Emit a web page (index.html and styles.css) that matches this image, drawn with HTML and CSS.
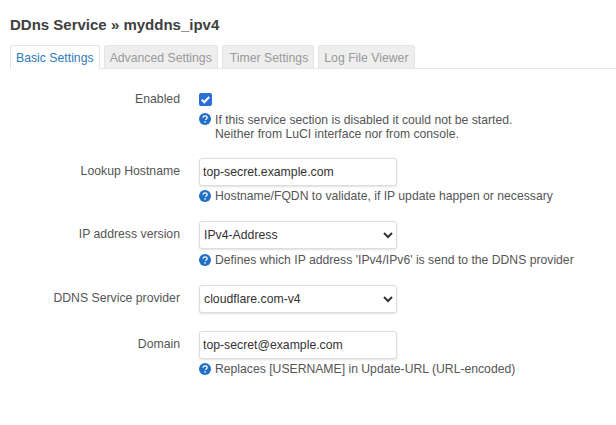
FILE: index.html
```html
<!DOCTYPE html>
<html lang="en">
<head>
  <meta charset="UTF-8" />
  <title>DDns Service - myddns_ipv4</title>
  <link rel="stylesheet" href="styles.css">
</head>
<body>

  <h2>DDns Service » myddns_ipv4</h2>

  <ul class="tabs">
    <li class="tab active">Basic Settings</li>
    <li class="tab">Advanced Settings</li>
    <li class="tab tab-timer">Timer Settings</li>
    <li class="tab">Log File Viewer</li>
  </ul>

  <div class="section">
    <div class="row row-check">
      <label class="title">Enabled</label>
      <div class="field">
        <span class="checkbox">
          <svg viewBox="0 0 13 13" width="13" height="13"><path d="M2.800 6.700l2.500 2.500L10.200 4" fill="none" stroke="#fff" stroke-width="2"/></svg>
        </span>
        <div class="help">
          <svg class="help-icon" viewBox="0 0 12 12" width="12" height="12"><circle cx="6" cy="6" r="6" fill="#1f6fc4"/><path d="M4.100 4.700c0-1.200.9-1.900 2-1.900s2 .7 2 1.700c0 1.500-1.500 1.400-1.500 2.600" fill="none" stroke="#fff" stroke-width="1.300"/><rect x="5.300" y="8.200" width="1.500" height="1.400" fill="#fff"/></svg>
          <span>If this service section is disabled it could not be started.<br>Neither from LuCI interface nor from console.</span>
        </div>
      </div>
    </div>

    <div class="row">
      <label class="title">Lookup Hostname</label>
      <div class="field">
        <input class="input" type="text" value="top-secret.example.com">
        <div class="help">
          <svg class="help-icon" viewBox="0 0 12 12" width="12" height="12"><circle cx="6" cy="6" r="6" fill="#1f6fc4"/><path d="M4.100 4.700c0-1.200.9-1.900 2-1.900s2 .7 2 1.700c0 1.500-1.500 1.400-1.500 2.600" fill="none" stroke="#fff" stroke-width="1.300"/><rect x="5.300" y="8.200" width="1.500" height="1.400" fill="#fff"/></svg>
          <span>Hostname/FQDN to validate, if IP update happen or necessary</span>
        </div>
      </div>
    </div>

    <div class="row row-select">
      <label class="title">IP address version</label>
      <div class="field">
        <select class="input">
          <option>IPv4-Address</option>
        </select>
        <div class="help">
          <svg class="help-icon" viewBox="0 0 12 12" width="12" height="12"><circle cx="6" cy="6" r="6" fill="#1f6fc4"/><path d="M4.100 4.700c0-1.200.9-1.900 2-1.900s2 .7 2 1.700c0 1.500-1.500 1.400-1.500 2.600" fill="none" stroke="#fff" stroke-width="1.300"/><rect x="5.300" y="8.200" width="1.500" height="1.400" fill="#fff"/></svg>
          <span>Defines which IP address 'IPv4/IPv6' is send to the DDNS provider</span>
        </div>
      </div>
    </div>

    <div class="row row-select">
      <label class="title">DDNS Service provider</label>
      <div class="field">
        <select class="input">
          <option>cloudflare.com-v4</option>
        </select>
      </div>
    </div>

    <div class="row">
      <label class="title">Domain</label>
      <div class="field">
        <input class="input" type="text" value="top-secret@example.com">
        <div class="help">
          <svg class="help-icon" viewBox="0 0 12 12" width="12" height="12"><circle cx="6" cy="6" r="6" fill="#1f6fc4"/><path d="M4.100 4.700c0-1.200.9-1.900 2-1.900s2 .7 2 1.700c0 1.500-1.500 1.400-1.500 2.600" fill="none" stroke="#fff" stroke-width="1.300"/><rect x="5.300" y="8.200" width="1.500" height="1.400" fill="#fff"/></svg>
          <span>Replaces [USERNAME] in Update-URL (URL-encoded)</span>
        </div>
      </div>
    </div>
  </div>

</body>
</html>
```

FILE: styles.css
```css
body {
  font-family: 'Liberation Sans', Arial, sans-serif;
  font-size: 12.25px;
  line-height: 14px;
  color: #555;
  background: #fff;
  margin: 0;
  padding: 16px 0 0 10px;
}

h2 {
  font-size: 15px;
  line-height: 17px;
  color: #404040;
  margin: 0 0 12px;
}

.tabs {
  display: flex;
  gap: 4px;
  list-style: none;
  margin: 0;
  padding: 0;
  border-bottom: 1px solid #e8e8e8;
}

.tab {
  padding: 5px 5px 3px;
  height: 14px;
  background: #eee;
  color: #999;
  border: 1px solid #e4e4e4;
  border-bottom: none;
  border-radius: 3px 3px 0 0;
}

.tab-timer {
  padding-left: 7px;
}

.tab.active {
  background: #fff;
  color: #2f79b9;
  margin-bottom: -1px;
  height: 15px;
}

.section {
  padding-top: 23px;
}

.row {
  display: flex;
  margin-bottom: 18px;
}

.row-check {
  margin-bottom: 17px;
}

.title {
  width: 170px;
  padding-top: 6px;
  text-align: right;
  flex-shrink: 0;
}

.row-check .title {
  padding-top: 0;
}

.field {
  margin-left: 19px;
}

.checkbox {
  display: flex;
  width: 13px;
  height: 13px;
  margin-top: 1px;
  background: #2a6fd6;
  border-radius: 2px;
}

.input {
  display: block;
  box-sizing: border-box;
  width: 198px;
  height: 28px;
  padding: 0 3px;
  font-family: inherit;
  font-size: 12.25px;
  color: #333;
  background: #fff;
  border: 1px solid #ddd;
  border-radius: 3px;
  box-shadow: 0 1px 2px rgba(0, 0, 0, 0.12);
}

select.input {
  padding: 0;
}

.help {
  display: flex;
  gap: 4px;
  margin-top: 3px;
  font-size: 12.2px;
}

.row-select .help {
  margin-top: 4px;
}

.row-check .help {
  margin-top: 7px;
}

.help-icon {
  flex-shrink: 0;
  margin-top: 1px;
}

.row-check .help-icon {
  margin-top: 0;
}
```
